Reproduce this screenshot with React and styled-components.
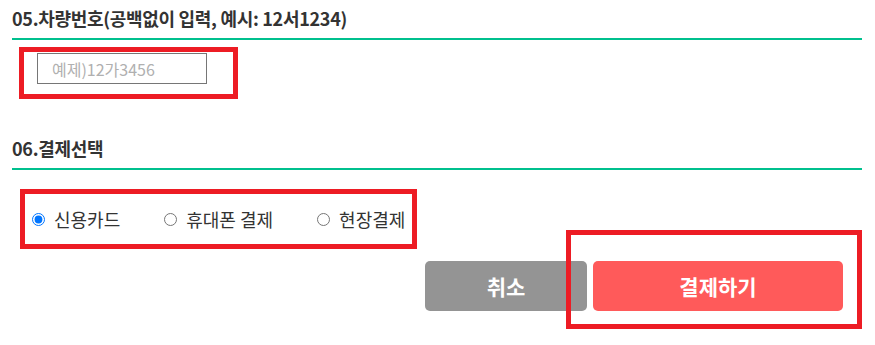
import React from "react";
import styled, { createGlobalStyle } from "styled-components";

const Global = createGlobalStyle`
  html, body { margin: 0; padding: 0; background: #fff; }
  body { font-family: "Noto Sans CJK KR", "Noto Sans", sans-serif; color: #333; min-height: 345px; }
`;

const Page = styled.div`
  width: 850px;
  padding: 0 0 20px 12px;
`;

const SectionTitle = styled.h3`
  margin: ${(p) => p.$top || 0}px 0 0;
  height: 40px;
  padding-top: 5px;
  box-sizing: border-box;
  line-height: 26px;
  font-size: 18px;
  font-weight: 700;
  color: #333;
  letter-spacing: -0.3px;
  border-bottom: 2px solid #00c08e;
`;

const Mark = styled.div`
  border: 5px solid #ed1c24;
  box-sizing: border-box;
  margin-left: ${(p) => p.$left}px;
  margin-top: ${(p) => p.$top}px;
  width: ${(p) => p.$w}px;
  height: ${(p) => p.$h}px;
`;

const InputMark = styled(Mark)`
  padding: 1px 0 0 13px;
`;

const PlateInput = styled.input`
  width: 170px;
  height: 31px;
  box-sizing: border-box;
  border: 1px solid #767676;
  padding: 0 0 0 14px;
  font-family: "Noto Sans CJK KR", sans-serif;
  font-size: 16px;
  outline: none;
  &::placeholder { color: #b0b0b0; }
`;

const RadioMark = styled(Mark)`
  display: flex;
  align-items: center;
  padding-left: 7px;
`;

const RadioLabel = styled.label`
  display: flex;
  align-items: center;
  flex-shrink: 0;
  white-space: nowrap;
  font-size: 18px;
  color: #333;
  margin-right: ${(p) => p.$gap || 0}px;
  input {
    flex-shrink: 0;
    width: 13px;
    height: 13px;
    margin: 0 9px 0 0;
    accent-color: #0075ff;
  }
`;

const ButtonRow = styled.div`
  position: relative;
  display: flex;
  justify-content: flex-end;
  gap: 6px;
  margin-top: 12px;
  padding-right: 19px;
`;

const Button = styled.button`
  width: ${(p) => p.$w}px;
  height: 50px;
  border: none;
  border-radius: 5px;
  background: ${(p) => p.$bg};
  color: #fff;
  font-family: "Noto Sans CJK KR", sans-serif;
  font-size: 21px;
  font-weight: 700;
  padding: 0;
`;

const Overlay = styled.div`
  position: absolute;
  top: -31px;
  right: 0;
  width: 296px;
  height: 99px;
  box-sizing: border-box;
  border: 5px solid #ed1c24;
  pointer-events: none;
`;

export default function App() {
  return (
    <>
      <Global />
      <Page>
        <SectionTitle>05.차량번호(공백없이 입력, 예시: 12서1234)</SectionTitle>
        <InputMark $left={7} $top={7} $w={219} $h={52}>
          <PlateInput placeholder="예제)12가3456" />
        </InputMark>
        <SectionTitle $top={31}>06.결제선택</SectionTitle>
        <RadioMark $left={8} $top={19} $w={397} $h={60}>
          <RadioLabel $gap={44}>
            <input type="radio" name="pay" defaultChecked />
            신용카드
          </RadioLabel>
          <RadioLabel $gap={44}>
            <input type="radio" name="pay" />
            휴대폰 결제
          </RadioLabel>
          <RadioLabel>
            <input type="radio" name="pay" />
            현장결제
          </RadioLabel>
        </RadioMark>
        <ButtonRow>
          <Button $w={162} $bg="#949494">취소</Button>
          <Button $w={250} $bg="#ff5a5a">결제하기</Button>
          <Overlay />
        </ButtonRow>
      </Page>
    </>
  );
}
